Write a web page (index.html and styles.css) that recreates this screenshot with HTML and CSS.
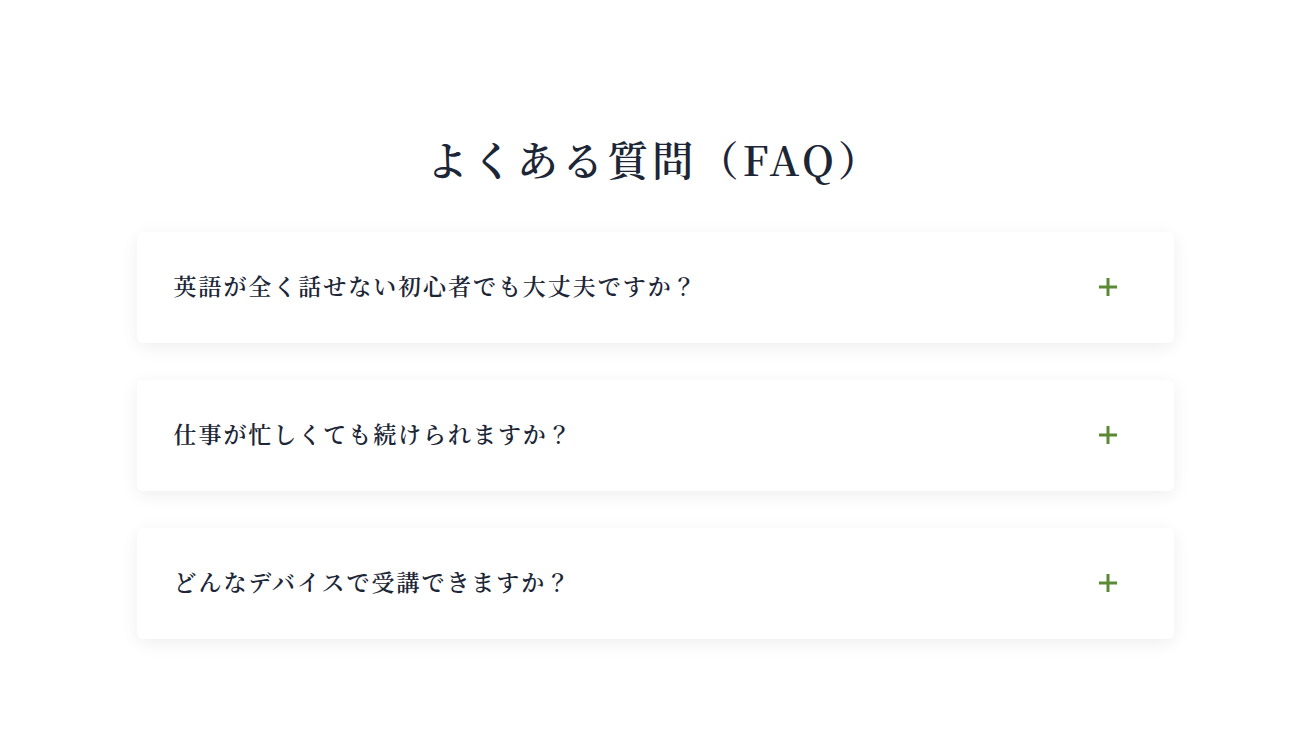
FILE: index.html
```html
<!DOCTYPE html>
<html lang="ja">
<head>
<meta charset="utf-8">
<title>よくある質問（FAQ）</title>
<link rel="stylesheet" href="styles.css">
</head>
<body>
<section class="faq">
  <h2 class="faq-title">よくある質問（FAQ）</h2>
  <div class="faq-list">
    <div class="faq-item">
      <span class="faq-q">英語が全く話せない初心者でも大丈夫ですか？</span>
      <svg class="faq-icon" width="20" height="20" viewBox="0 0 20 20" aria-hidden="true"><path d="M10 1v18M1 10h18" stroke="currentColor" stroke-width="3" fill="none"/></svg>
    </div>
    <div class="faq-item">
      <span class="faq-q">仕事が忙しくても続けられますか？</span>
      <svg class="faq-icon" width="20" height="20" viewBox="0 0 20 20" aria-hidden="true"><path d="M10 1v18M1 10h18" stroke="currentColor" stroke-width="3" fill="none"/></svg>
    </div>
    <div class="faq-item">
      <span class="faq-q">どんなデバイスで受講できますか？</span>
      <svg class="faq-icon" width="20" height="20" viewBox="0 0 20 20" aria-hidden="true"><path d="M10 1v18M1 10h18" stroke="currentColor" stroke-width="3" fill="none"/></svg>
    </div>
  </div>
</section>
</body>
</html>
```
FILE: styles.css
```css
html, body {
  margin: 0;
  padding: 0;
  background: #ffffff;
}
body {
  font-family: "Noto Serif CJK JP", "Liberation Serif", "Noto Sans CJK JP", serif;
  color: #1c2636;
}
.faq {
  padding: 131px 0 93px 6px;
}
.faq-title {
  margin: 0;
  text-align: center;
  font-size: 41px;
  line-height: 56px;
  font-weight: 600;
  letter-spacing: 0.1em;
  color: #1c2636;
}
.faq-list {
  width: 1037px;
  margin: 45px auto 0;
  display: flex;
  flex-direction: column;
  gap: 37px;
}
.faq-item {
  background: #fff;
  border-radius: 6px;
  box-shadow: 0 4px 18px rgba(0, 0, 0, 0.07);
  height: 111px;
  box-sizing: border-box;
  padding: 0 56px 3px 37px;
  display: flex;
  align-items: center;
  justify-content: space-between;
}
.faq-q {
  font-size: 23px;
  font-weight: 600;
  letter-spacing: 0.085em;
  line-height: 1.6;
}
.faq-icon {
  color: #5a8a34;
  flex: none;
  margin-top: 1px;
}
```
